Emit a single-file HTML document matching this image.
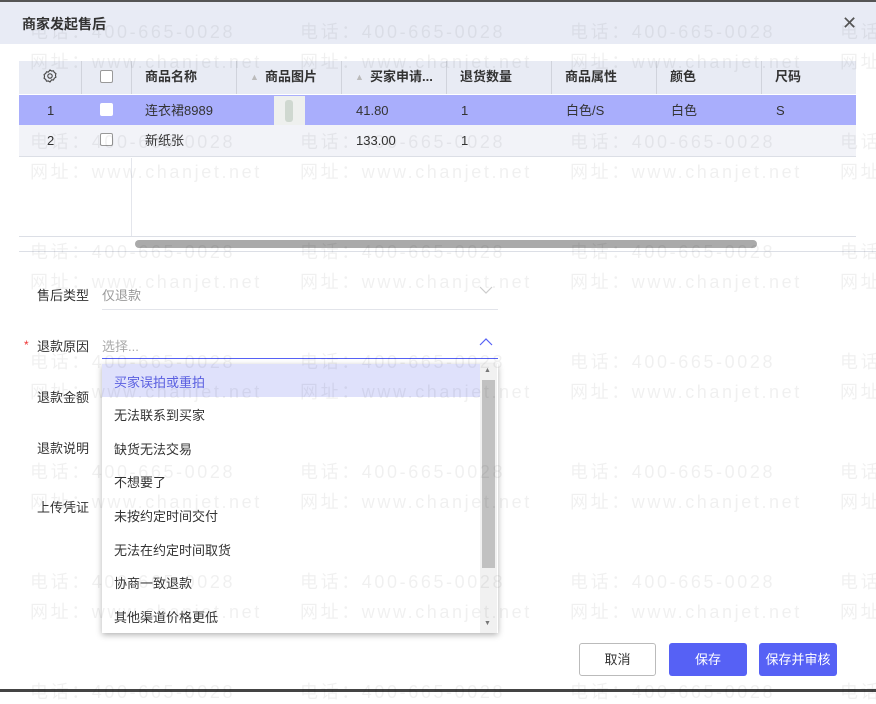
<!DOCTYPE html>
<html><head><meta charset="utf-8"><style>
*{margin:0;padding:0;box-sizing:border-box}
body{width:876px;height:692px;overflow:hidden;background:#fff;font-family:"Liberation Sans","Noto Sans CJK SC",sans-serif;font-size:13px;color:#333;position:relative}
.a{position:absolute}
.hdr{left:0;top:0;width:876px;height:44px;background:#e8ebf5;border-top:2px solid #555}
.title{left:22px;top:14px;font-size:14px;color:#333;font-weight:bold}
.close{left:842px;top:14px;font-size:18px;color:#555;line-height:18px}
.th{top:61px;height:33px;background:#e8ebf4;left:19px;width:837px}
.r1{top:95px;height:30px;background:#a9aefc;left:19px;width:837px}
.r2{top:125px;height:32px;background:#f2f3f8;left:19px;width:837px;border-bottom:1px solid #dcdfe6}
.c{position:absolute;line-height:30px;white-space:nowrap}
.vl{position:absolute;top:61px;width:1px;height:33px;background:#d0d3dc}
.cb{position:absolute;width:13px;height:13px;border:1px solid #999;border-radius:2px;background:#fff}
.wm{position:absolute;font-size:18px;color:rgba(0,0,0,0.06);white-space:nowrap;letter-spacing:2.6px;pointer-events:none;z-index:50}
.lbl{position:absolute;left:37px;font-size:13px;color:#333}
.dd{left:102px;top:364px;width:396px;height:269px;background:#fff;box-shadow:0 2px 6px rgba(0,0,0,0.3);z-index:10}
.it{position:absolute;left:12px;font-size:13px;color:#333}
.btn{position:absolute;top:643px;height:33px;border-radius:3px;text-align:center;line-height:33px;font-size:13px}
</style></head><body>
<div class="a hdr"></div>
<div class="a title">商家发起售后</div>
<div class="a close">✕</div>

<div class="a th"></div>
<div class="a r1"></div>
<div class="a r2"></div>
<div class="vl" style="left:81px"></div><div class="vl" style="left:131px"></div><div class="vl" style="left:236px"></div><div class="vl" style="left:341px"></div><div class="vl" style="left:446px"></div><div class="vl" style="left:551px"></div><div class="vl" style="left:656px"></div><div class="vl" style="left:761px"></div>
<svg class="a" style="left:43px;top:69px" width="14" height="14" viewBox="0 0 14 14"><path d="M7 1l1.6 1 1.9-.2.8 1.7 1.6 1-.4 1.9.4 1.8-1.6 1-.8 1.8-1.9-.2L7 13l-1.6-1-1.9.2-.8-1.8-1.6-1L1.5 7.4 1.1 5.5l1.6-1 .8-1.7 1.9.2z" fill="none" stroke="#444" stroke-width="1.1"/><circle cx="7" cy="7" r="2.2" fill="none" stroke="#444" stroke-width="1.1"/></svg>
<div class="cb" style="left:100px;top:70px"></div>
<div class="c" style="left:145px;top:62px;font-weight:bold">商品名称</div>
<div class="c" style="left:250px;top:62px;color:#bbb;font-size:9px">▲</div>
<div class="c" style="left:265px;top:62px;font-weight:bold">商品图片</div>
<div class="c" style="left:355px;top:62px;color:#bbb;font-size:9px">▲</div>
<div class="c" style="left:370px;top:62px;font-weight:bold">买家申请...</div>
<div class="c" style="left:460px;top:62px;font-weight:bold">退货数量</div>
<div class="c" style="left:565px;top:62px;font-weight:bold">商品属性</div>
<div class="c" style="left:670px;top:62px;font-weight:bold">颜色</div>
<div class="c" style="left:775px;top:62px;font-weight:bold">尺码</div>

<div class="c" style="left:47px;top:96px">1</div>
<div class="cb" style="left:100px;top:103px;border-color:#fff"></div>
<div class="c" style="left:145px;top:96px">连衣裙8989</div>
<div class="a" style="left:274px;top:96px;width:31px;height:29px;background:#eef0ee"><div class="a" style="left:11px;top:4px;width:8px;height:22px;background:#cfd8d0;border-radius:3px"></div></div>
<div class="c" style="left:356px;top:96px">41.80</div>
<div class="c" style="left:461px;top:96px">1</div>
<div class="c" style="left:566px;top:96px">白色/S</div>
<div class="c" style="left:671px;top:96px">白色</div>
<div class="c" style="left:776px;top:96px">S</div>

<div class="c" style="left:47px;top:126px">2</div>
<div class="cb" style="left:100px;top:133px"></div>
<div class="c" style="left:145px;top:126px">新纸张</div>
<div class="c" style="left:356px;top:126px">133.00</div>
<div class="c" style="left:461px;top:126px">1</div>

<div class="a" style="left:131px;top:158px;width:1px;height:78px;background:#e4e6ec"></div>
<div class="a" style="left:19px;top:236px;width:837px;height:1px;background:#dcdfe6"></div>
<div class="a" style="left:135px;top:240px;width:622px;height:8px;background:#aaa;border-radius:4px"></div>
<div class="a" style="left:19px;top:251px;width:857px;height:1px;background:#dcdfe6"></div>

<div class="lbl" style="top:285px">售后类型</div>
<div class="a" style="left:102px;top:285px;color:#999">仅退款</div>
<svg class="a" style="left:479px;top:286px" width="14" height="9"><path d="M1 1l6 6 6-6" fill="none" stroke="#ccc" stroke-width="1.2"/></svg>
<div class="a" style="left:102px;top:309px;width:396px;height:1px;background:#e2e4ea"></div>

<div class="a" style="left:24px;top:338px;color:#e33;font-size:12px">*</div>
<div class="lbl" style="top:336px">退款原因</div>
<div class="a" style="left:102px;top:336px;color:#aaa">选择...</div>
<svg class="a" style="left:479px;top:337px" width="14" height="9"><path d="M1 8l6-6 6 6" fill="none" stroke="#5661f5" stroke-width="1.2"/></svg>
<div class="a" style="left:102px;top:358px;width:396px;height:1px;background:#5661f5"></div>

<div class="lbl" style="top:387px">退款金额</div>
<div class="lbl" style="top:438px">退款说明</div>
<div class="lbl" style="top:497px">上传凭证</div>

<div class="a dd">
<div class="a" style="left:0;top:0;width:378px;height:33px;background:#dfe1fb"></div>
<div class="it" style="top:8px;color:#5a5fe0">买家误拍或重拍</div>
<div class="it" style="top:41px">无法联系到买家</div>
<div class="it" style="top:75px">缺货无法交易</div>
<div class="it" style="top:108px">不想要了</div>
<div class="it" style="top:142px">未按约定时间交付</div>
<div class="it" style="top:176px">无法在约定时间取货</div>
<div class="it" style="top:209px">协商一致退款</div>
<div class="it" style="top:243px">其他渠道价格更低</div>
<div class="a" style="left:378px;top:0;width:17px;height:269px;background:#f1f1f1"></div>
<div class="a" style="left:382px;top:3px;font-size:7px;color:#777">▲</div>
<div class="a" style="left:382px;top:256px;font-size:7px;color:#777">▼</div>
<div class="a" style="left:380px;top:16px;width:13px;height:188px;background:#c1c1c1"></div>
</div>

<div class="btn" style="left:579px;width:77px;border:1px solid #bbb;background:#fff;color:#333;line-height:31px">取消</div>
<div class="btn" style="left:669px;width:78px;background:#5661f5;color:#fff">保存</div>
<div class="btn" style="left:759px;width:78px;background:#5661f5;color:#fff">保存并审核</div>
<div class="a" style="left:0;top:689px;width:876px;height:3px;background:#444"></div>

<div class="wm" style="left:30px;top:18px">电话：400-665-0028</div><div class="wm" style="left:300px;top:18px">电话：400-665-0028</div><div class="wm" style="left:570px;top:18px">电话：400-665-0028</div><div class="wm" style="left:840px;top:18px">电话：400-665-0028</div>
<div class="wm" style="left:30px;top:48px">网址：www.chanjet.net</div><div class="wm" style="left:300px;top:48px">网址：www.chanjet.net</div><div class="wm" style="left:570px;top:48px">网址：www.chanjet.net</div><div class="wm" style="left:840px;top:48px">网址：www.chanjet.net</div>
<div class="wm" style="left:30px;top:128px">电话：400-665-0028</div><div class="wm" style="left:300px;top:128px">电话：400-665-0028</div><div class="wm" style="left:570px;top:128px">电话：400-665-0028</div><div class="wm" style="left:840px;top:128px">电话：400-665-0028</div>
<div class="wm" style="left:30px;top:158px">网址：www.chanjet.net</div><div class="wm" style="left:300px;top:158px">网址：www.chanjet.net</div><div class="wm" style="left:570px;top:158px">网址：www.chanjet.net</div><div class="wm" style="left:840px;top:158px">网址：www.chanjet.net</div>
<div class="wm" style="left:30px;top:238px">电话：400-665-0028</div><div class="wm" style="left:300px;top:238px">电话：400-665-0028</div><div class="wm" style="left:570px;top:238px">电话：400-665-0028</div><div class="wm" style="left:840px;top:238px">电话：400-665-0028</div>
<div class="wm" style="left:30px;top:268px">网址：www.chanjet.net</div><div class="wm" style="left:300px;top:268px">网址：www.chanjet.net</div><div class="wm" style="left:570px;top:268px">网址：www.chanjet.net</div><div class="wm" style="left:840px;top:268px">网址：www.chanjet.net</div>
<div class="wm" style="left:30px;top:348px">电话：400-665-0028</div><div class="wm" style="left:300px;top:348px">电话：400-665-0028</div><div class="wm" style="left:570px;top:348px">电话：400-665-0028</div><div class="wm" style="left:840px;top:348px">电话：400-665-0028</div>
<div class="wm" style="left:30px;top:378px">网址：www.chanjet.net</div><div class="wm" style="left:300px;top:378px">网址：www.chanjet.net</div><div class="wm" style="left:570px;top:378px">网址：www.chanjet.net</div><div class="wm" style="left:840px;top:378px">网址：www.chanjet.net</div>
<div class="wm" style="left:30px;top:458px">电话：400-665-0028</div><div class="wm" style="left:300px;top:458px">电话：400-665-0028</div><div class="wm" style="left:570px;top:458px">电话：400-665-0028</div><div class="wm" style="left:840px;top:458px">电话：400-665-0028</div>
<div class="wm" style="left:30px;top:488px">网址：www.chanjet.net</div><div class="wm" style="left:300px;top:488px">网址：www.chanjet.net</div><div class="wm" style="left:570px;top:488px">网址：www.chanjet.net</div><div class="wm" style="left:840px;top:488px">网址：www.chanjet.net</div>
<div class="wm" style="left:30px;top:568px">电话：400-665-0028</div><div class="wm" style="left:300px;top:568px">电话：400-665-0028</div><div class="wm" style="left:570px;top:568px">电话：400-665-0028</div><div class="wm" style="left:840px;top:568px">电话：400-665-0028</div>
<div class="wm" style="left:30px;top:598px">网址：www.chanjet.net</div><div class="wm" style="left:300px;top:598px">网址：www.chanjet.net</div><div class="wm" style="left:570px;top:598px">网址：www.chanjet.net</div><div class="wm" style="left:840px;top:598px">网址：www.chanjet.net</div>
<div class="wm" style="left:30px;top:678px">电话：400-665-0028</div><div class="wm" style="left:300px;top:678px">电话：400-665-0028</div><div class="wm" style="left:570px;top:678px">电话：400-665-0028</div><div class="wm" style="left:840px;top:678px">电话：400-665-0028</div>
</body></html>
